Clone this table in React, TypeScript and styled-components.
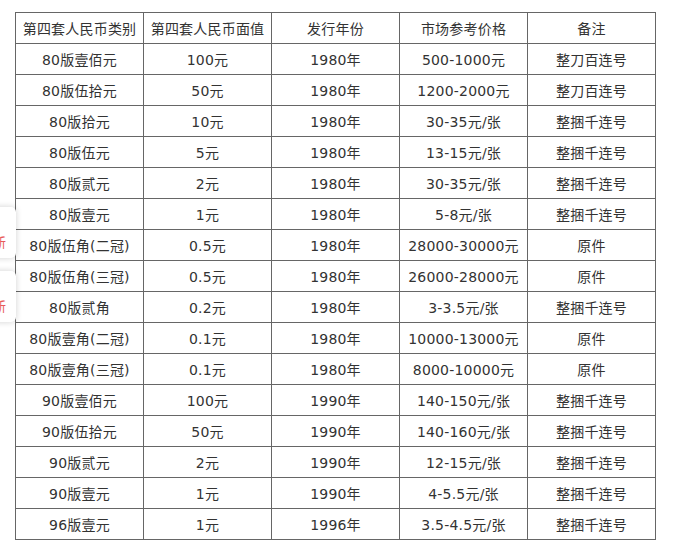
import React from "react";
import styled, { createGlobalStyle } from "styled-components";

const Global = createGlobalStyle`
  html, body { margin: 0; padding: 0; background: #fff; }
  body { font-family: "DejaVu Sans", "Noto Sans CJK SC", sans-serif; }
`;

const Page = styled.div`
  padding: 12px 0 0 15px;
  position: relative;
`;

const Table = styled.table`
  border-collapse: collapse;
  width: 641px;
  table-layout: fixed;
  color: #333;
  font-size: 14px;
`;

const Cell = styled.td`
  border: 1px solid #666;
  height: 30px;
  padding: 0;
  text-align: center;
  vertical-align: middle;
  white-space: nowrap;
  letter-spacing: 0.2px;
`;

const Side = styled.div<{ $top: number }>`
  position: absolute;
  left: -30px;
  top: ${(p) => p.$top}px;
  width: 46px;
  height: 51px;
  background: #fff;
  border-radius: 5px;
  box-shadow: 0 0 6px rgba(0, 0, 0, 0.18);
  display: flex;
  align-items: flex-end;
  justify-content: flex-end;
  padding: 0 10px 7px 0;
  box-sizing: border-box;
  color: #e8595a;
  font-size: 13px;
  font-family: "Noto Sans CJK SC", sans-serif;
`;

const rows: string[][] = [
  ["第四套人民币类别", "第四套人民币面值", "发行年份", "市场参考价格", "备注"],
  ["80版壹佰元", "100元", "1980年", "500-1000元", "整刀百连号"],
  ["80版伍拾元", "50元", "1980年", "1200-2000元", "整刀百连号"],
  ["80版拾元", "10元", "1980年", "30-35元/张", "整捆千连号"],
  ["80版伍元", "5元", "1980年", "13-15元/张", "整捆千连号"],
  ["80版贰元", "2元", "1980年", "30-35元/张", "整捆千连号"],
  ["80版壹元", "1元", "1980年", "5-8元/张", "整捆千连号"],
  ["80版伍角(二冠)", "0.5元", "1980年", "28000-30000元", "原件"],
  ["80版伍角(三冠)", "0.5元", "1980年", "26000-28000元", "原件"],
  ["80版贰角", "0.2元", "1980年", "3-3.5元/张", "整捆千连号"],
  ["80版壹角(二冠)", "0.1元", "1980年", "10000-13000元", "原件"],
  ["80版壹角(三冠)", "0.1元", "1980年", "8000-10000元", "原件"],
  ["90版壹佰元", "100元", "1990年", "140-150元/张", "整捆千连号"],
  ["90版伍拾元", "50元", "1990年", "140-160元/张", "整捆千连号"],
  ["90版贰元", "2元", "1990年", "12-15元/张", "整捆千连号"],
  ["90版壹元", "1元", "1990年", "4-5.5元/张", "整捆千连号"],
  ["96版壹元", "1元", "1996年", "3.5-4.5元/张", "整捆千连号"],
];

export default function App() {
  return (
    <>
      <Global />
      <Page>
        <Table>
          <tbody>
            {rows.map((r, i) => (
              <tr key={i}>
                {r.map((c, j) => (
                  <Cell key={j}>{c}</Cell>
                ))}
              </tr>
            ))}
          </tbody>
        </Table>
        <Side $top={207}>新</Side>
        <Side $top={271}>新</Side>
      </Page>
    </>
  );
}
